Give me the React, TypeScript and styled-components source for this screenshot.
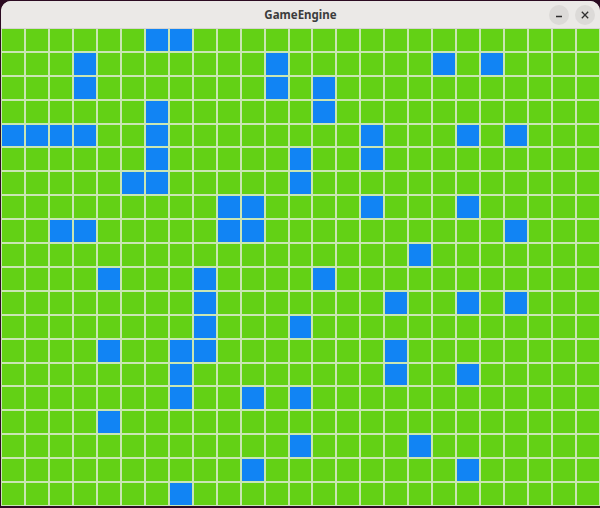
import styled, { createGlobalStyle } from 'styled-components';

const GlobalStyle = createGlobalStyle`
  html,
  body {
    margin: 0;
    padding: 0;
    background: #2c0b22;
  }

  #root {
    width: 600px;
    height: 508px;
    overflow: hidden;
  }
`;

// 25 x 20 board, '#' = water tile
const BOARD = [
  '......##.................',
  '...#.......#......#.#....',
  '...#.......#.#...........',
  '......#......#...........',
  '####..#........#...#.#...',
  '......#.....#..#.........',
  '.....##.....#............',
  '.........##....#...#.....',
  '..##.....##..........#...',
  '.................#.......',
  '....#...#....#...........',
  '........#.......#..#.#...',
  '........#...#............',
  '....#..##.......#........',
  '.......#........#..#.....',
  '.......#..#.#............',
  '....#....................',
  '............#....#.......',
  '..........#........#.....',
  '.......#.................',
];

const Window = styled.div`
  display: flex;
  flex-direction: column;
  width: 599px;
  height: 505px;
  margin: 1px 0 0 1px;
  border-radius: 10px 10px 0 0;
  overflow: hidden;
  background: #ebe9e7;
`;

const TitleBar = styled.div`
  position: relative;
  display: flex;
  align-items: center;
  justify-content: center;
  flex: 0 0 27px;
  background: #ebe9e7;
  border-bottom: 1px solid #d6d4d2;
`;

const Title = styled.span`
  font-family: 'Noto Sans', 'DejaVu Sans', sans-serif;
  font-size: 11.5px;
  font-weight: 700;
  color: #3c3c3c;
  letter-spacing: 0;
`;

const Controls = styled.div`
  position: absolute;
  top: 4px;
  right: 5px;
  display: flex;
  gap: 6px;
`;

const RoundButton = styled.button`
  display: flex;
  align-items: center;
  justify-content: center;
  width: 20px;
  height: 20px;
  padding: 0;
  border: none;
  border-radius: 50%;
  background: #dcdad8;
  color: #2f2f2f;
`;

const Board = styled.div`
  flex: 1;
  display: grid;
  grid-template-columns: repeat(25, 1fr);
  grid-template-rows: repeat(20, 1fr);
  gap: 2px;
  padding: 0 1px 1px 1px;
  background: #c9e6b3;
`;

const Tile = styled.div<{ $water: boolean }>`
  background: ${props => (props.$water ? '#1184f4' : '#63d115')};
`;

export default function App() {
  return (
    <>
      <GlobalStyle />
      <Window>
        <TitleBar>
          <Title>GameEngine</Title>
          <Controls>
            <RoundButton aria-label='Minimize'>
              <svg width='10' height='10' viewBox='0 0 10 10'>
                <path d='M2 6.5h6' stroke='currentColor' strokeWidth='1.3' />
              </svg>
            </RoundButton>
            <RoundButton aria-label='Close'>
              <svg width='10' height='10' viewBox='0 0 10 10'>
                <path d='M1.8 1.8l6.4 6.4M8.2 1.8l-6.4 6.4' stroke='currentColor' strokeWidth='1.3' />
              </svg>
            </RoundButton>
          </Controls>
        </TitleBar>
        <Board>
          {BOARD.map((row, r) =>
            row.split('').map((c, i) => <Tile key={`${r}-${i}`} $water={c === '#'} />),
          )}
        </Board>
      </Window>
    </>
  );
}
